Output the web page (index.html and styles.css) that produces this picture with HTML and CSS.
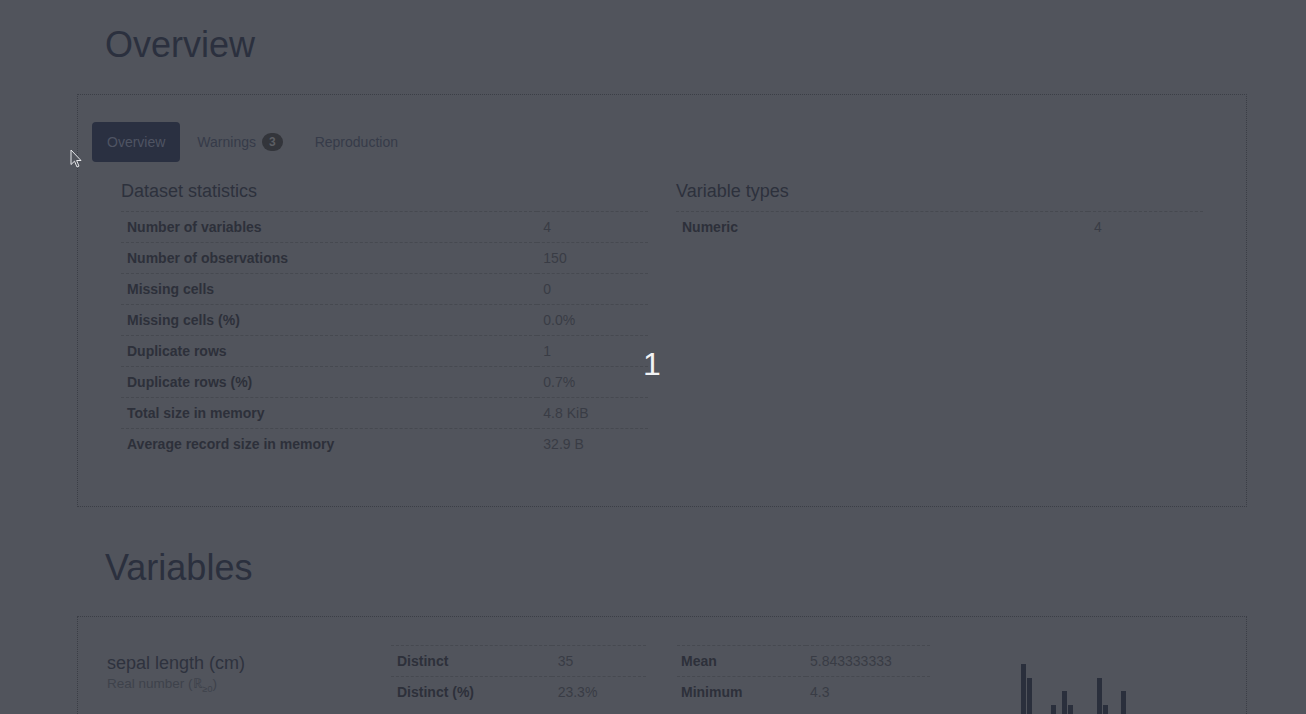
FILE: index.html
```html
<!DOCTYPE html>
<html lang="en">
<head>
<meta charset="utf-8">
<title>Profile report</title>
<link rel="stylesheet" href="styles.css">
</head>
<body>
<div class="page">
  <h1 class="section-title first">Overview</h1>
  <div class="card overview-card">
    <ul class="pills">
      <li class="pill active">Overview</li>
      <li class="pill">Warnings <span class="badge">3</span></li>
      <li class="pill">Reproduction</li>
    </ul>
    <div class="overview-grid">
      <div class="stat-block">
        <h4 class="block-title">Dataset statistics</h4>
        <table class="stats">
          <tr><th>Number of variables</th><td>4</td></tr>
          <tr><th>Number of observations</th><td>150</td></tr>
          <tr><th>Missing cells</th><td>0</td></tr>
          <tr><th>Missing cells (%)</th><td>0.0%</td></tr>
          <tr><th>Duplicate rows</th><td>1</td></tr>
          <tr><th>Duplicate rows (%)</th><td>0.7%</td></tr>
          <tr><th>Total size in memory</th><td>4.8 KiB</td></tr>
          <tr><th>Average record size in memory</th><td>32.9 B</td></tr>
        </table>
      </div>
      <div class="stat-block">
        <h4 class="block-title">Variable types</h4>
        <table class="stats types">
          <tr><th>Numeric</th><td>4</td></tr>
        </table>
      </div>
    </div>
  </div>

  <h1 class="section-title second">Variables</h1>
  <div class="card variable-card">
    <div class="var-info">
      <p class="var-name">sepal length (cm)</p>
      <p class="var-type">Real number (ℝ<sub>≥0</sub>)</p>
    </div>
    <table class="stats var-table-a">
      <tr><th>Distinct</th><td>35</td></tr>
      <tr><th>Distinct (%)</th><td>23.3%</td></tr>
    </table>
    <table class="stats var-table-b">
      <tr><th>Mean</th><td>5.843333333</td></tr>
      <tr><th>Minimum</th><td>4.3</td></tr>
    </table>
    <div class="histogram">
      <svg width="270" height="70" viewBox="0 0 270 70">
        <g fill="#2a2f3c">
          <rect x="60" y="19" width="5" height="51"/>
          <rect x="66" y="33" width="5" height="37"/>
          <rect x="90" y="60" width="5" height="10"/>
          <rect x="101" y="46" width="5" height="24"/>
          <rect x="107" y="60" width="5" height="10"/>
          <rect x="136" y="33" width="5" height="37"/>
          <rect x="142" y="60" width="5" height="10"/>
          <rect x="160" y="46" width="5" height="24"/>
        </g>
      </svg>
    </div>
  </div>
</div>

<div class="counter">1</div>
<svg class="cursor" width="13" height="20" viewBox="0 0 13 20">
  <path d="M1 1 L1 15.5 L4.5 12.2 L7 18 L9 17.1 L6.6 11.5 L11 11.5 Z" fill="#51545c" stroke="#e6e7ea" stroke-width="1" stroke-linejoin="miter"/>
</svg>
</body>
</html>
```

FILE: styles.css
```css
html, body {
  margin: 0;
  padding: 0;
  overflow: hidden;
  height: 714px;
}

body {
  background: #51545c;
  font-family: "Liberation Sans", Arial, Helvetica, sans-serif;
  font-size: 14px;
  line-height: 20px;
  color: #2e323c;
}

.page {
  margin-left: 77px;
  width: 1170px;
}

.section-title {
  margin: 0 0 30px 28px;
  font-size: 36px;
  line-height: 40px;
  font-weight: 400;
  color: #2b303e;
}

.section-title.first {
  margin-top: 25px;
  margin-bottom: 29px;
}

.section-title.second {
  margin-bottom: 28px;
}

.card {
  border: 1px dotted #3b3e46;
  box-sizing: border-box;
}

.overview-card {
  padding: 27px 14px 47px 14px;
  margin-bottom: 41px;
}

.pills {
  display: flex;
  list-style: none;
  margin: 0;
  padding: 0;
}

.pill {
  padding: 10px 15px;
  margin-right: 2px;
  border-radius: 4px;
  color: #363b49;
  display: flex;
  align-items: center;
}

.pill.active {
  background: #2a3041;
  color: #4f5463;
}

.badge {
  display: inline-block;
  margin-left: 6px;
  padding: 0 7px;
  height: 18px;
  line-height: 18px;
  border-radius: 10px;
  background: #33353b;
  color: #5c5e64;
  font-size: 12px;
  font-weight: 700;
}

.overview-grid {
  display: grid;
  grid-template-columns: 527px 527px;
  column-gap: 28px;
  padding-left: 29px;
  margin-top: 19px;
}

.block-title {
  margin: 0 0 10px 0;
  font-size: 18px;
  line-height: 20px;
  font-weight: 400;
  color: #2d313c;
}

.stats {
  width: 100%;
  border-collapse: collapse;
}

.stats th,
.stats td {
  border-top: 1px dashed #464950;
  padding: 5px 5px 5px 6px;
  text-align: left;
  vertical-align: top;
}

.stats th {
  width: 79%;
  font-weight: 700;
  color: #2d303a;
}

.stats.types th {
  width: 78.2%;
}

.stats td {
  color: #393c45;
}

.variable-card {
  display: grid;
  grid-template-columns: 253px 255px 253px 1fr;
  column-gap: 31px;
  padding: 28px 0 0 29px;
  height: 140px;
}

.var-info {
  padding-top: 8px;
}

.var-name {
  margin: 0;
  font-size: 18px;
  line-height: 20px;
  color: #2e323e;
}

.var-type {
  margin: 2px 0 0 0;
  font-size: 13.5px;
  line-height: 18px;
  color: #3e424b;
}

.var-type sub {
  font-size: 9px;
  line-height: 0;
}

.var-table-a,
.var-table-b {
  height: fit-content;
}

.var-table-a th {
  width: 63%;
}

.var-table-b th {
  width: 51%;
}

.var-table-b th,
.var-table-b td {
  padding-left: 4px;
}

.histogram svg {
  display: block;
}

.counter {
  position: absolute;
  left: 643px;
  top: 348px;
  font-size: 32px;
  line-height: 32px;
  color: #f2f3f5;
}

.cursor {
  position: absolute;
  left: 70px;
  top: 149px;
}
```
